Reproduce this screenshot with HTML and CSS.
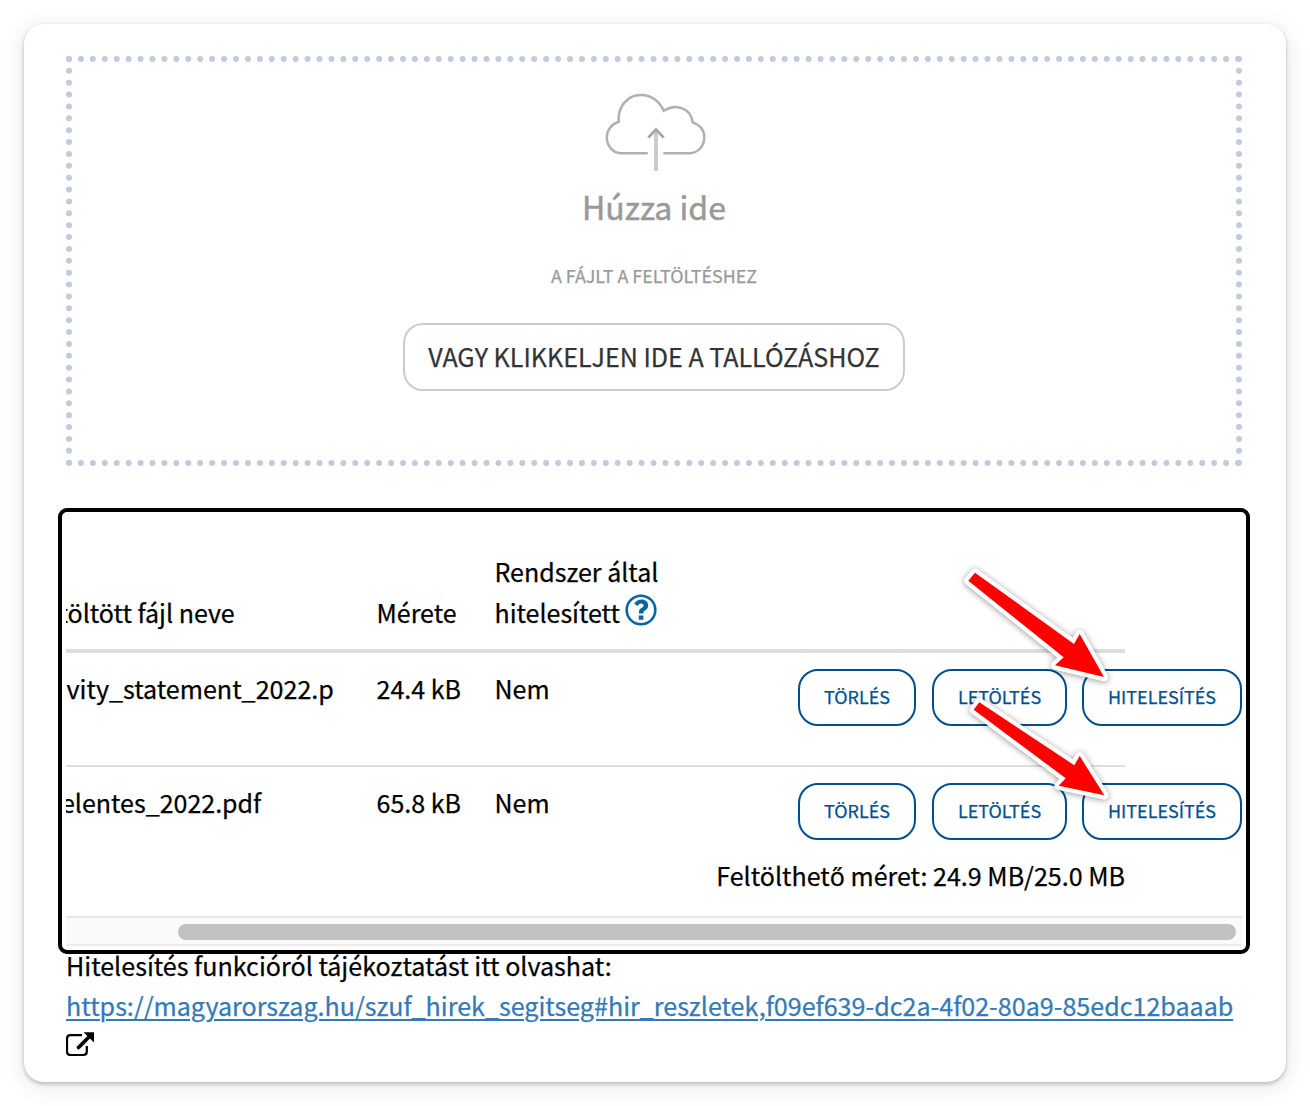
FILE: index.html
```html
<!DOCTYPE html>
<html lang="hu">
<head>
<meta charset="utf-8">
<title>Fájlfeltöltés</title>
<link rel="stylesheet" href="styles.css">
</head>
<body>
<main class="card">
  <section class="dropzone">
    <svg class="cloud" width="110" height="85" viewBox="600 90 110 85" fill="none">
      <path d="M647.7 153.2H621.7C613 153.2 606.8 146 606.8 137.5C606.8 130 611.5 124 618.7 121.7C617.5 107 627 95 641 95C651 95 659.5 101 663.7 110.7C677.5 102 691.5 110 692.7 122.3C700 125 704.3 130.5 704.3 137.2C704.3 146 698 153.2 689.3 153.2H663.3" stroke="#b0b0b0" stroke-width="2.5"/>
      <path d="M656 130V171" stroke="#cccccc" stroke-width="4"/>
      <path d="M648.3 137.6L656 129.6L663.7 137.6" stroke="#a5a5a5" stroke-width="2.8"/>
    </svg>
    <h2 class="drop-title">Húzza ide</h2>
    <p class="drop-sub">A FÁJLT A FELTÖLTÉSHEZ</p>
    <button class="browse" type="button">VAGY KLIKKELJEN IDE A TALLÓZÁSHOZ</button>
  </section>

  <section class="files">
    <div class="viewport">
      <div class="row head">
        <div class="name"><span class="cut-head">töltött fájl neve</span></div>
        <div class="size">Mérete</div>
        <div class="auth">Rendszer által<br><span class="help-line">hitelesített<svg class="help" width="32" height="32" viewBox="0 0 32 32" fill="none"><circle cx="16" cy="16" r="14.3" stroke="#0067a5" stroke-width="2.6"/><path d="M9.2 9.6C11.2 6.7 13.6 5.5 16.4 5.5C20.4 5.5 23.2 8.1 23.2 11.4C23.2 15.8 18.4 16.4 18.4 18.6V19.5H14V18C14 14 18.6 13.9 18.6 11.6C18.6 10.3 17.6 9.5 16.1 9.5C14.5 9.5 13.6 10.4 12.3 11.9ZM13.8 21.4H18.4V25.8H13.8Z" fill="#0067a5"/></svg></span></div>
      </div>
      <div class="row">
        <div class="name"><span class="shift-name">vity_statement_2022.p</span></div>
        <div class="size">24.4 kB</div>
        <div class="auth">Nem</div>
        <div class="actions">
          <button class="btn w1" type="button">TÖRLÉS</button>
          <button class="btn w2" type="button">LETÖLTÉS</button>
          <button class="btn w3" type="button">HITELESÍTÉS</button>
        </div>
      </div>
      <div class="row ruled">
        <div class="name"><span class="cut-name">elentes_2022.pdf</span></div>
        <div class="size">65.8 kB</div>
        <div class="auth">Nem</div>
        <div class="actions">
          <button class="btn w1" type="button">TÖRLÉS</button>
          <button class="btn w2" type="button">LETÖLTÉS</button>
          <button class="btn w3" type="button">HITELESÍTÉS</button>
        </div>
      </div>
      <p class="quota">Feltölthető méret: 24.9 MB/25.0 MB</p>
    </div>
    <div class="scrollbar"><div class="thumb"></div></div>
  </section>

  <p class="info">Hitelesítés funkcióról tájékoztatást itt olvashat:<br><a class="link" href="#">https://magyarorszag.hu/szuf_hirek_segitseg#hir_reszletek,f09ef639-dc2a-4f02-80a9-85edc12baaab</a></p>
  <svg class="external" width="28" height="25" viewBox="66 1032 28 25" fill="none">
    <path d="M82 1035.2H70.5Q67 1035.2 67 1038.7V1051.5Q67 1055 70.5 1055H83.3Q86.8 1055 86.8 1051.5V1046" stroke="#000" stroke-width="2.2"/>
    <path d="M78.5 1047.5L90 1036" stroke="#000" stroke-width="3.8" stroke-linecap="round"/>
    <path d="M83.6 1032.2H94V1042.6Z" fill="#000"/>
  </svg>
</main>

<svg class="arrows" width="180" height="260" viewBox="950 555 180 260">
  <polygon points="975,572.7 1074,644 1079.7,634 1104,677 1055,665.3 1063.7,657.3 968.3,580.7"/>
  <polygon points="979.3,702.3 1074.3,765.3 1079.7,756 1104.3,795.3 1058.7,785.7 1065.7,778.3 973.7,709.7"/>
</svg>
</body>
</html>
```

FILE: styles.css
```css
* { box-sizing: border-box; }
body {
  margin: 0;
  padding: 24px;
  position: relative;
  background: #fff;
  color: #000;
  font: 25px/40px "Noto Sans CJK SC", "Noto Sans", sans-serif;
  -webkit-text-stroke: .25px;
}
h2, p { margin: 0; font-weight: 400; }
button { font-family: inherit; background: #fff; padding: 0 0 2px; white-space: nowrap; -webkit-text-stroke: inherit; }

.card {
  height: 1058px;
  padding: 32px 44px 0 42px;
  border-radius: 20px;
  background: #fff;
  box-shadow: 0 2px 4px rgba(0, 0, 0, .24), 0 4px 24px rgba(0, 0, 0, .1);
}

.dropzone {
  display: flex;
  flex-direction: column;
  align-items: center;
  height: 410px;
  padding-top: 28px;
  border: 6px dotted #c0ccdc;
}
.cloud { display: block; margin-left: 2px; }
.drop-title { margin-top: 11px; font-size: 32px; line-height: 40px; color: #999; -webkit-text-stroke: .5px; }
.drop-sub { margin-top: 34px; font-size: 17.9px; line-height: 30px; color: #999; }
.browse {
  width: 502px;
  height: 68px;
  margin-top: 33px;
  border: 2px solid #ccc;
  border-radius: 20px;
  font-size: 25.08px;
  color: #333;
}

.files {
  height: 430px;
  margin-top: 50px;
  border-radius: 1px;
  outline: 4px solid #000;
  outline-offset: 4px;
}
.viewport { height: 400px; overflow: hidden; white-space: nowrap; }
.row {
  display: grid;
  grid-template-columns: 310.5px 118px 303.5px 327px;
  width: 1059px;
  height: 112px;
  padding-top: 15px;
}
.head {
  align-items: end;
  height: 137px;
  padding: 0 0 16px;
  line-height: 41px;
  border-bottom: 4px solid #ddd;
}
.ruled { height: 114px; border-top: 2px solid #ddd; }
.cut-head { margin-left: -7.5px; }
.shift-name { margin-left: .5px; font-size: 25.08px; }
.cut-name { margin-left: -5px; }
.help-line { display: flex; align-items: center; height: 41px; }
.help { margin: -6px 0 0 5px; }
.actions { display: flex; gap: 16px; margin-top: 1px; }
.btn {
  flex: none;
  height: 57px;
  padding-bottom: 4px;
  border: 2px solid #004f8f;
  border-radius: 20px;
  font-size: 17.95px;
  color: #004f8f;
}
.w1 { width: 118px; }
.w2 { width: 135px; }
.w3 { width: 160px; margin-left: -1px; }
.quota { width: 1059px; margin-top: -24px; text-align: right; font-size: 25.05px; }

.scrollbar {
  height: 30px;
  padding: 6px 6px 0 112px;
  border-top: 2px solid #e8e8e8;
  border-bottom: 2px solid #ededed;
  background: #fafafa;
}
.thumb { height: 16px; border-radius: 8px; background: #c2c2c2; }

.info { margin-top: -1px; white-space: nowrap; font-size: 25.08px; }
.link { color: #337ab7; text-decoration: underline; text-decoration-thickness: 2px; text-underline-offset: 3px; }
.external { display: block; margin-top: 7px; }

.arrows { position: absolute; left: 950px; top: 555px; filter: drop-shadow(0 1px 3px rgba(0, 0, 0, .4)); }
.arrows polygon { fill: #f00; stroke: #fff; stroke-width: 8.5px; stroke-linejoin: round; paint-order: stroke; }
```
